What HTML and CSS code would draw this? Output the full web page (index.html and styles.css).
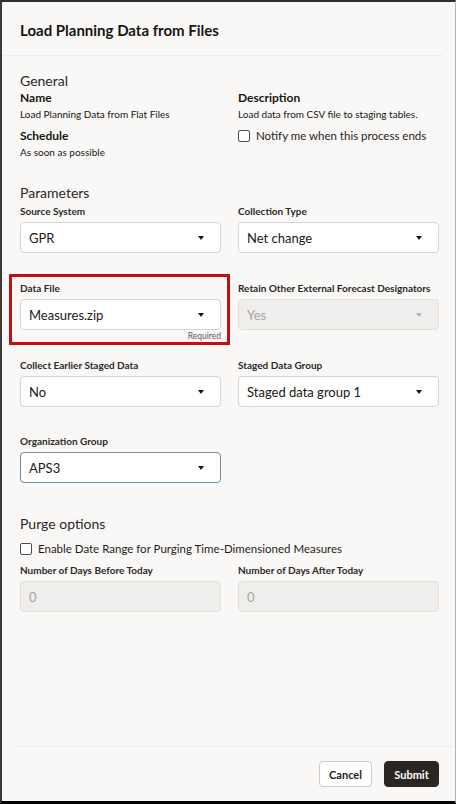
FILE: index.html
```html
<!DOCTYPE html>
<html lang="en">
  <head>
    <meta charset="UTF-8" />
    <title>Load Planning Data from Files</title>
    <meta name="viewport" content="width=device-width, initial-scale=1.0" />
    <link rel="stylesheet" href="styles.css">
  </head>
  <body>
    <div class="dialog">
      <div class="dialog-header">
        <h1>Load Planning Data from Files</h1>
      </div>

      <div class="dialog-body">
        <section class="general">
          <h2>General</h2>
          <div class="grid">
            <div class="col">
              <div class="info">
                <div class="info-label">Name</div>
                <div class="info-value">Load Planning Data from Flat Files</div>
              </div>
              <div class="info">
                <div class="info-label">Schedule</div>
                <div class="info-value">As soon as possible</div>
              </div>
            </div>
            <div class="col">
              <div class="info">
                <div class="info-label">Description</div>
                <div class="info-value">Load data from CSV file to staging tables.</div>
              </div>
              <label class="check notify">
                <span class="box"></span>
                Notify me when this process ends
              </label>
            </div>
          </div>
        </section>

        <section class="params">
          <h2>Parameters</h2>
          <div class="grid row-1">
            <div class="field">
              <div class="field-label">Source System</div>
              <div class="select"><span>GPR</span><i class="caret"></i></div>
            </div>
            <div class="field">
              <div class="field-label">Collection Type</div>
              <div class="select"><span>Net change</span><i class="caret"></i></div>
            </div>
          </div>

          <div class="grid row-2">
            <div class="field highlight">
              <div class="field-label">Data File</div>
              <div class="select"><span>Measures.zip</span><i class="caret"></i></div>
              <div class="hint">Required</div>
            </div>
            <div class="field offset">
              <div class="field-label">Retain Other External Forecast Designators</div>
              <div class="select disabled"><span>Yes</span><i class="caret"></i></div>
            </div>
          </div>

          <div class="grid row-3">
            <div class="field">
              <div class="field-label">Collect Earlier Staged Data</div>
              <div class="select"><span>No</span><i class="caret"></i></div>
            </div>
            <div class="field">
              <div class="field-label">Staged Data Group</div>
              <div class="select"><span>Staged data group 1</span><i class="caret"></i></div>
            </div>
          </div>

          <div class="grid row-4">
            <div class="field">
              <div class="field-label">Organization Group</div>
              <div class="select focused"><span>APS3</span><i class="caret"></i></div>
            </div>
          </div>
        </section>

        <section class="purge">
          <h2>Purge options</h2>
          <label class="check">
            <span class="box"></span>
            Enable Date Range for Purging Time-Dimensioned Measures
          </label>
          <div class="grid row-5">
            <div class="field">
              <div class="field-label">Number of Days Before Today</div>
              <div class="select disabled"><span>0</span></div>
            </div>
            <div class="field">
              <div class="field-label">Number of Days After Today</div>
              <div class="select disabled"><span>0</span></div>
            </div>
          </div>
        </section>
      </div>

      <div class="dialog-footer">
        <button class="btn">Cancel</button>
        <button class="btn primary">Submit</button>
      </div>
    </div>
  </body>
</html>
```

FILE: styles.css
```css
* {
  box-sizing: border-box;
}
body {
  margin: 0;
  font-family: Lato, "Noto Sans", sans-serif;
  color: #161513;
  background: #f9f8f6;
}
.dialog {
  width: 456px;
  height: 804px;
  display: flex;
  flex-direction: column;
  background: #f9f8f6;
  border-top: 2px solid #2e2e2e;
  border-left: 2px solid #3a3a3a;
  border-right: 1px solid #b4b4b4;
  border-bottom: 3px solid #000;
}
.dialog-header {
  padding: 18px 0 15px 18px;
  margin-right: 12px;
  border-bottom: 1px solid #efede9;
}
h1 {
  margin: 0;
  font-size: 15px;
  line-height: 20px;
  font-weight: 700;
}
.dialog-body {
  flex: 1;
  padding: 0 16px 0 18px;
}
h2 {
  margin: 0;
  font-size: 14px;
  line-height: 18px;
  font-weight: 400;
  color: #2b2825;
}
.grid {
  display: grid;
  grid-template-columns: 201px 201px;
  column-gap: 17px;
  align-items: start;
}
.general {
  margin-top: 16px;
}
.info {
  margin-bottom: 7px;
}
.info-label {
  font-size: 12px;
  line-height: 16px;
  font-weight: 700;
}
.info-value {
  font-size: 10px;
  line-height: 14px;
  margin-top: 1px;
}
.check {
  display: flex;
  align-items: center;
  gap: 6px;
  font-size: 11.5px;
  line-height: 16px;
  color: #1f1d1b;
}
.check .box {
  width: 12px;
  height: 12px;
  border: 1px solid #4f4b47;
  border-radius: 2px;
  background: #fff;
  flex: none;
}
.notify {
  margin-top: 6px;
}
.params {
  margin-top: 18px;
}
.field-label {
  font-size: 10px;
  line-height: 16px;
  font-weight: 700;
  color: #2b2825;
  margin-bottom: 3px;
  white-space: nowrap;
}
.select {
  height: 31px;
  background: #fff;
  border: 1px solid #d7d3ce;
  border-radius: 4px;
  display: flex;
  align-items: center;
  justify-content: space-between;
  padding: 0 16px 0 8px;
  font-size: 13px;
  color: #1a1816;
}
.select.disabled {
  background: #efeeec;
  border-color: #e3e0dc;
  color: #a8a4a0;
}
.select.disabled .caret {
  border-top-color: #b8b4b0;
}
.select.focused {
  border-color: #6f8da6;
}
.caret {
  width: 0;
  height: 0;
  border-left: 3.5px solid transparent;
  border-right: 3.5px solid transparent;
  border-top: 4px solid #1a1816;
}
.row-1 {
  margin-top: 1px;
}
.row-2 {
  margin-top: 21px;
}
.highlight {
  margin: 0 -9px 0 -11px;
  padding: 3px 6px 0 8px;
  border: 3px solid #c01010;
}
.offset {
  padding-top: 6px;
}
.hint {
  text-align: right;
  font-size: 8.5px;
  line-height: 11px;
  margin-top: 1px;
  color: #5b5753;
}
.row-3 {
  margin-top: 12px;
}
.row-4 {
  margin-top: 26px;
}
.purge {
  margin-top: 32px;
}
.purge .check {
  margin-top: 8px;
}
.row-5 {
  margin-top: 5px;
}
.dialog-footer {
  display: flex;
  justify-content: flex-end;
  gap: 12px;
  padding: 14px 16px 14px 0;
  margin-left: 12px;
  border-top: 1px solid #f0eeea;
}
.btn {
  height: 26px;
  font-family: Lato, "Noto Sans", sans-serif;
  font-size: 11px;
  font-weight: 700;
  border-radius: 4px;
  border: 1px solid #cfcbc6;
  background: #fff;
  color: #1f1d1b;
  padding: 0;
  width: 53px;
}
.btn.primary {
  width: 55px;
  background: #2a2623;
  border-color: #2a2623;
  color: #fff;
}
```
